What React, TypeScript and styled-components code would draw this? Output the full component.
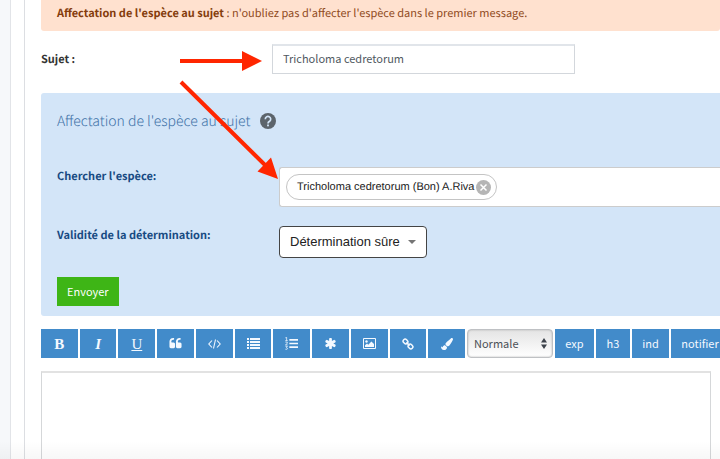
import React from "react";
import styled, { createGlobalStyle } from "styled-components";
import { FaPaintBrush } from "react-icons/fa";

const sans = `"Source Sans Pro", "Noto Sans CJK SC", sans-serif`;
const system = `"Liberation Sans", Helvetica, sans-serif`;

const GlobalStyle = createGlobalStyle`
  *, *::before, *::after { box-sizing: border-box; }
  body {
    margin: 0;
    overflow: hidden;
    background: #f6f8fa;
    color: #333;
    font: 11px/18px ${sans};
    text-rendering: geometricPrecision;
  }
`;

const Page = styled.div`
  position: relative;
  padding-left: 10px;
  height: 100vh;
  overflow: hidden;
`;

const Sheet = styled.div`
  min-height: 100%;
  padding-left: 13px;
  background: #fff;
  border-left: 1px solid #e2e4e8;
`;

const Form = styled.form`
  min-height: 100vh;
  padding-left: 16px;
  border-left: 1px solid #dcdee2;
`;

const Alert = styled.div`
  margin-bottom: 13px;
  padding: 4px 16px 9px;
  background: #ffe1cf;
  border-radius: 0 0 3px 3px;
  color: #8f4a1c;

  strong { color: #843c0c; }
`;

const SubjectRow = styled.div`
  display: grid;
  grid-template-columns: 231px minmax(0, 303px);
  align-items: center;
  margin-bottom: 19px;
`;

const Label = styled.label<{ $tone?: string }>`
  font-weight: 700;
  color: ${(p) => p.$tone ?? "#333"};
`;

const SubjectInput = styled.input`
  width: 100%;
  height: 30px;
  padding: 0 10px 3px;
  border: 1px solid #d3d7dc;
  border-top: 2px solid #e1e5ea;
  border-radius: 0;
  outline: 0;
  background: #fff;
  color: #505961;
  font: 11px/18px ${sans};
`;

const Panel = styled.section`
  margin-bottom: 13px;
  padding: 16px 0 10px 16px;
  background: #d3e5f8;
  border-radius: 3px 0 0 3px;
`;

const PanelHead = styled.header`
  display: flex;
  align-items: center;
  gap: 10px;
  height: 24px;
  margin-bottom: 34px;
`;

const Title = styled.h2`
  margin: 0;
  color: #4273a8;
  font: 300 14px/24px ${sans};
`;

const IconButton = styled.button`
  display: flex;
  padding: 0;
  border: 0;
  background: none;
`;

const Field = styled.div`
  display: grid;
  grid-template-columns: 222px minmax(0, 1fr);
  align-items: start;
  margin-bottom: 19px;
`;

const SpeciesBox = styled.div`
  display: flex;
  align-items: center;
  height: 40px;
  padding: 0 6px;
  background: #fff;
  border: 1px solid #ccc;
  border-right: 0;
  border-radius: 3px 0 0 3px;
`;

const Chip = styled.span`
  display: flex;
  align-items: center;
  justify-content: space-between;
  width: 211px;
  height: 26px;
  padding: 0 5px 0 10px;
  border: 1px solid #c4c4c4;
  border-radius: 13px;
  color: #222;
  font: 11px/16px ${system};
  white-space: nowrap;
`;

const SearchInput = styled.input`
  flex: 1;
  min-width: 0;
  border: 0;
  outline: 0;
  background: none;
`;

const SelectWrap = styled.span`
  display: grid;
  align-items: center;
  justify-items: end;
  justify-self: start;

  > * { grid-area: 1 / 1; }
  > svg { margin-right: 11px; pointer-events: none; }
`;

const ValiditySelect = styled.select`
  appearance: none;
  width: 148px;
  height: 32px;
  padding: 0 10px;
  border: 1px solid #444;
  border-radius: 4px;
  background: #fff;
  color: #222;
  font: 13px/18px ${system};
`;

const Submit = styled.button`
  display: block;
  height: 29px;
  padding: 0 10px 2px;
  border: 0;
  background: #3eb516;
  color: #fff;
  font: 11px/18px ${sans};
`;

const Toolbar = styled.div`
  display: flex;
  gap: 2px;
  height: 29px;
  margin-bottom: 13px;
`;

const IconGroup = styled.div`
  display: flex;
  flex: none;
  gap: 2px;
  width: 424px;
`;

const ToolButton = styled.button`
  display: flex;
  flex: 1;
  align-items: center;
  justify-content: center;
  padding: 0;
  border: 0;
  background: #428bca;
  color: #f4f9ff;
`;

const Letter = styled.span<{ $kind: "b" | "i" | "u" }>`
  font: ${(p) => (p.$kind === "u" ? 400 : 700)} 15px/16px "Liberation Serif", serif;
  font-style: ${(p) => (p.$kind === "i" ? "italic" : "normal")};
  text-decoration: ${(p) => (p.$kind === "u" ? "underline" : "none")};
`;

const TextButton = styled(ToolButton)<{ $width: number }>`
  flex: none;
  width: ${(p) => p.$width}px;
  padding-bottom: 2px;
  font: 11px/18px ${sans};
`;

const SizeSelect = styled.select`
  appearance: none;
  width: 86px;
  height: 29px;
  padding: 0 6px 2px;
  border: 1px solid #bfc1c4;
  border-radius: 4px;
  background: linear-gradient(#e4e4e4, #fff);
  box-shadow: inset 0 0 2px #aaa;
  color: #4b5056;
  font: 11px/18px ${sans};
`;

const SizeWrap = styled(SelectWrap)`
  > svg { margin-right: 6px; }
`;

const Message = styled.textarea`
  display: block;
  width: calc(100% - 9px);
  height: 200px;
  padding: 8px;
  border: 1px solid #d5d7d9;
  border-top: 2px solid #e2e2e2;
  outline: 0;
  resize: none;
  background: #fff;
  font: 11px/18px ${sans};
`;

const Fade = styled.div`
  position: absolute;
  inset: auto 0 0;
  height: 18px;
  background: linear-gradient(transparent, rgba(0, 0, 0, 0.03));
  pointer-events: none;
`;

const Arrows = styled.svg`
  position: absolute;
  top: 0;
  left: 0;
  pointer-events: none;
`;

const HelpIcon = () => (
  <svg width="16" height="16" viewBox="0 0 16 16">
    <circle cx="8" cy="8" r="8" fill="#5c646b" />
    <path d="M5.3 6.2a2.7 2.7 0 1 1 4.3 2.1C8.500 9 8 9.300 8 10.400" fill="none" stroke="#d3e5f8" strokeWidth="1.700" />
    <rect x="7.100" y="11.500" width="1.800" height="1.800" fill="#d3e5f8" />
  </svg>
);

const RemoveIcon = () => (
  <svg width="15" height="15" viewBox="0 0 15 15">
    <circle cx="7.500" cy="7.500" r="7.500" fill="#b5b5b5" />
    <path d="M4.500 4.500l6 6m0-6l-6 6" stroke="#fff" strokeWidth="1.500" />
  </svg>
);

const quoteMark =
  "M768 960v384q0 80-56 136t-136 56h-384q-80 0-136-56t-56-136v-704q0-104 40.500-198.500t109.500-163.500 163.500-109.500 198.500-40.500h64q26 0 45 19t19 45v128q0 26-19 45t-45 19h-64q-106 0-181 75t-75 181v32q0 40 28 68t68 28h224q80 0 136 56t56 136z";

const QuoteIcon = () => (
  <svg width="13" height="13" viewBox="0 0 1664 1792" fill="currentColor">
    <path d={quoteMark} />
    <path d={quoteMark} transform="translate(896 0)" />
  </svg>
);

const AsteriskIcon = () => (
  <svg width="13" height="13" viewBox="0 0 1792 1792" fill="currentColor">
    <path d="M1546 1050q46 26 59.500 77.500t-12.500 97.500l-64 110q-26 46-77.500 59.500t-97.500-12.500l-266-153v307q0 52-38 90t-90 38h-128q-52 0-90-38t-38-90v-307l-266 153q-46 26-97.500 12.500t-77.500-59.500l-64-110q-26-46-12.500-97.500t59.500-77.500l266-154-266-154q-46-26-59.500-77.500t12.500-97.500l64-110q26-46 77.500-59.500t97.500 12.500l266 153v-307q0-52 38-90t90-38h128q52 0 90 38t38 90v307l266-153q46-26 97.500-12.500t77.500 59.500l64 110q26 46 12.500 97.500t-59.500 77.500l-266 154z" />
  </svg>
);

const CodeIcon = () => (
  <svg width="13" height="10" viewBox="0 0 13 10" fill="none" stroke="currentColor" strokeWidth="1.100">
    <path d="M4 1.500L.8 5 4 8.500M9 1.500L12.200 5 9 8.500M7.500.5l-2 9" />
  </svg>
);

const ListIcon = () => (
  <svg width="13" height="11" viewBox="0 0 13 11" fill="currentColor">
    {[0, 3, 6, 9].map((y) => (
      <path key={y} d={`M0 ${y}h2v2H0zM3 ${y}H13v2H3z`} />
    ))}
  </svg>
);

const OrderedIcon = () => (
  <svg width="13" height="13" viewBox="0 0 12 12" fill="currentColor">
    <path d="M4 1.800h8v1.600H4zM4 5.200h8v1.600H4zM4 8.600h8v1.600H4z" />
    <path d="M.3.800L1.500.3v3M.3 3.300h2.200M.3 4.700h1.800v1.200L.4 7.300h2M.4 8.600h1.800L1.300 9.800q1.500.3.700 1.400-.7.500-1.700 0" fill="none" stroke="currentColor" strokeWidth=".7" />
  </svg>
);

const ImageIcon = () => (
  <svg width="13" height="11" viewBox="0 0 13 11" fill="currentColor">
    <path d="M.5.5h12v10H.5z" fill="none" stroke="currentColor" />
    <circle cx="3.500" cy="3.500" r="1.200" />
    <path d="M2 9V7.300l2-1.800 1.300 1.200L8.400 3.500 11 6v3z" />
  </svg>
);

const LinkIcon = () => (
  <svg width="12" height="12" viewBox="0 0 12 12" fill="none" stroke="currentColor" strokeWidth="1.500">
    <rect x="1" y="1.500" width="5" height="4" rx="2" transform="rotate(45 3.500 3.500)" />
    <rect x="6" y="6.500" width="5" height="4" rx="2" transform="rotate(45 8.500 8.500)" />
    <path d="M4.400 4.400l3.200 3.200" />
  </svg>
);

const blue = "#174a82";

export default function App() {
  return (
    <Page>
      <GlobalStyle />
      <Sheet>
        <Form onSubmit={(e) => e.preventDefault()}>
          <Alert>
            <strong>Affectation de l'espèce au sujet</strong> : n'oubliez pas d'affecter l'espèce dans le premier message.
          </Alert>
          <SubjectRow>
            <Label htmlFor="subject">Sujet :</Label>
            <SubjectInput id="subject" defaultValue="Tricholoma cedretorum" />
          </SubjectRow>
          <Panel>
            <PanelHead>
              <Title>Affectation de l'espèce au sujet</Title>
              <IconButton type="button" aria-label="Aide"><HelpIcon /></IconButton>
            </PanelHead>
            <Field>
              <Label htmlFor="species" $tone={blue}>Chercher l'espèce:</Label>
              <SpeciesBox>
                <Chip>
                  Tricholoma cedretorum (Bon) A.Riva
                  <IconButton type="button" aria-label="Retirer"><RemoveIcon /></IconButton>
                </Chip>
                <SearchInput id="species" />
              </SpeciesBox>
            </Field>
            <Field>
              <Label htmlFor="validity" $tone={blue}>Validité de la détermination:</Label>
              <SelectWrap>
                <ValiditySelect id="validity"><option>Détermination sûre</option></ValiditySelect>
                <svg width="8" height="4" viewBox="0 0 8 4"><path d="M0 0h8L4 4z" fill="#757575" /></svg>
              </SelectWrap>
            </Field>
            <Submit type="submit">Envoyer</Submit>
          </Panel>
          <Toolbar>
            <IconGroup>
              <ToolButton type="button" aria-label="Gras"><Letter $kind="b">B</Letter></ToolButton>
              <ToolButton type="button" aria-label="Italique"><Letter $kind="i">I</Letter></ToolButton>
              <ToolButton type="button" aria-label="Souligné"><Letter $kind="u">U</Letter></ToolButton>
              <ToolButton type="button" aria-label="Citation"><QuoteIcon /></ToolButton>
              <ToolButton type="button" aria-label="Code"><CodeIcon /></ToolButton>
              <ToolButton type="button" aria-label="Liste"><ListIcon /></ToolButton>
              <ToolButton type="button" aria-label="Liste ordonnée"><OrderedIcon /></ToolButton>
              <ToolButton type="button" aria-label="Élément de liste"><AsteriskIcon /></ToolButton>
              <ToolButton type="button" aria-label="Image"><ImageIcon /></ToolButton>
              <ToolButton type="button" aria-label="Lien"><LinkIcon /></ToolButton>
              <ToolButton type="button" aria-label="Couleur"><FaPaintBrush size={12} /></ToolButton>
            </IconGroup>
            <SizeWrap>
              <SizeSelect aria-label="Taille"><option>Normale</option></SizeSelect>
              <svg width="6" height="11" viewBox="0 0 6 11"><path d="M0 4.500L3 0l3 4.500zM0 6.500h6L3 11z" fill="#3d434b" /></svg>
            </SizeWrap>
            <TextButton type="button" $width={39}>exp</TextButton>
            <TextButton type="button" $width={34}>h3</TextButton>
            <TextButton type="button" $width={37}>ind</TextButton>
            <TextButton type="button" $width={58}>notifier</TextButton>
          </Toolbar>
          <Message aria-label="Message" />
        </Form>
      </Sheet>
      <Fade />
      <Arrows width="290" height="190" viewBox="0 0 290 190" fill="#ff2600" stroke="#ff2600">
        <path d="M180 61h64M181 82l84 83" strokeWidth="4" />
        <path d="M242 51l20 10-20 10zM278 179l-20.500-7.500 13.500-14z" stroke="none" />
      </Arrows>
    </Page>
  );
}
